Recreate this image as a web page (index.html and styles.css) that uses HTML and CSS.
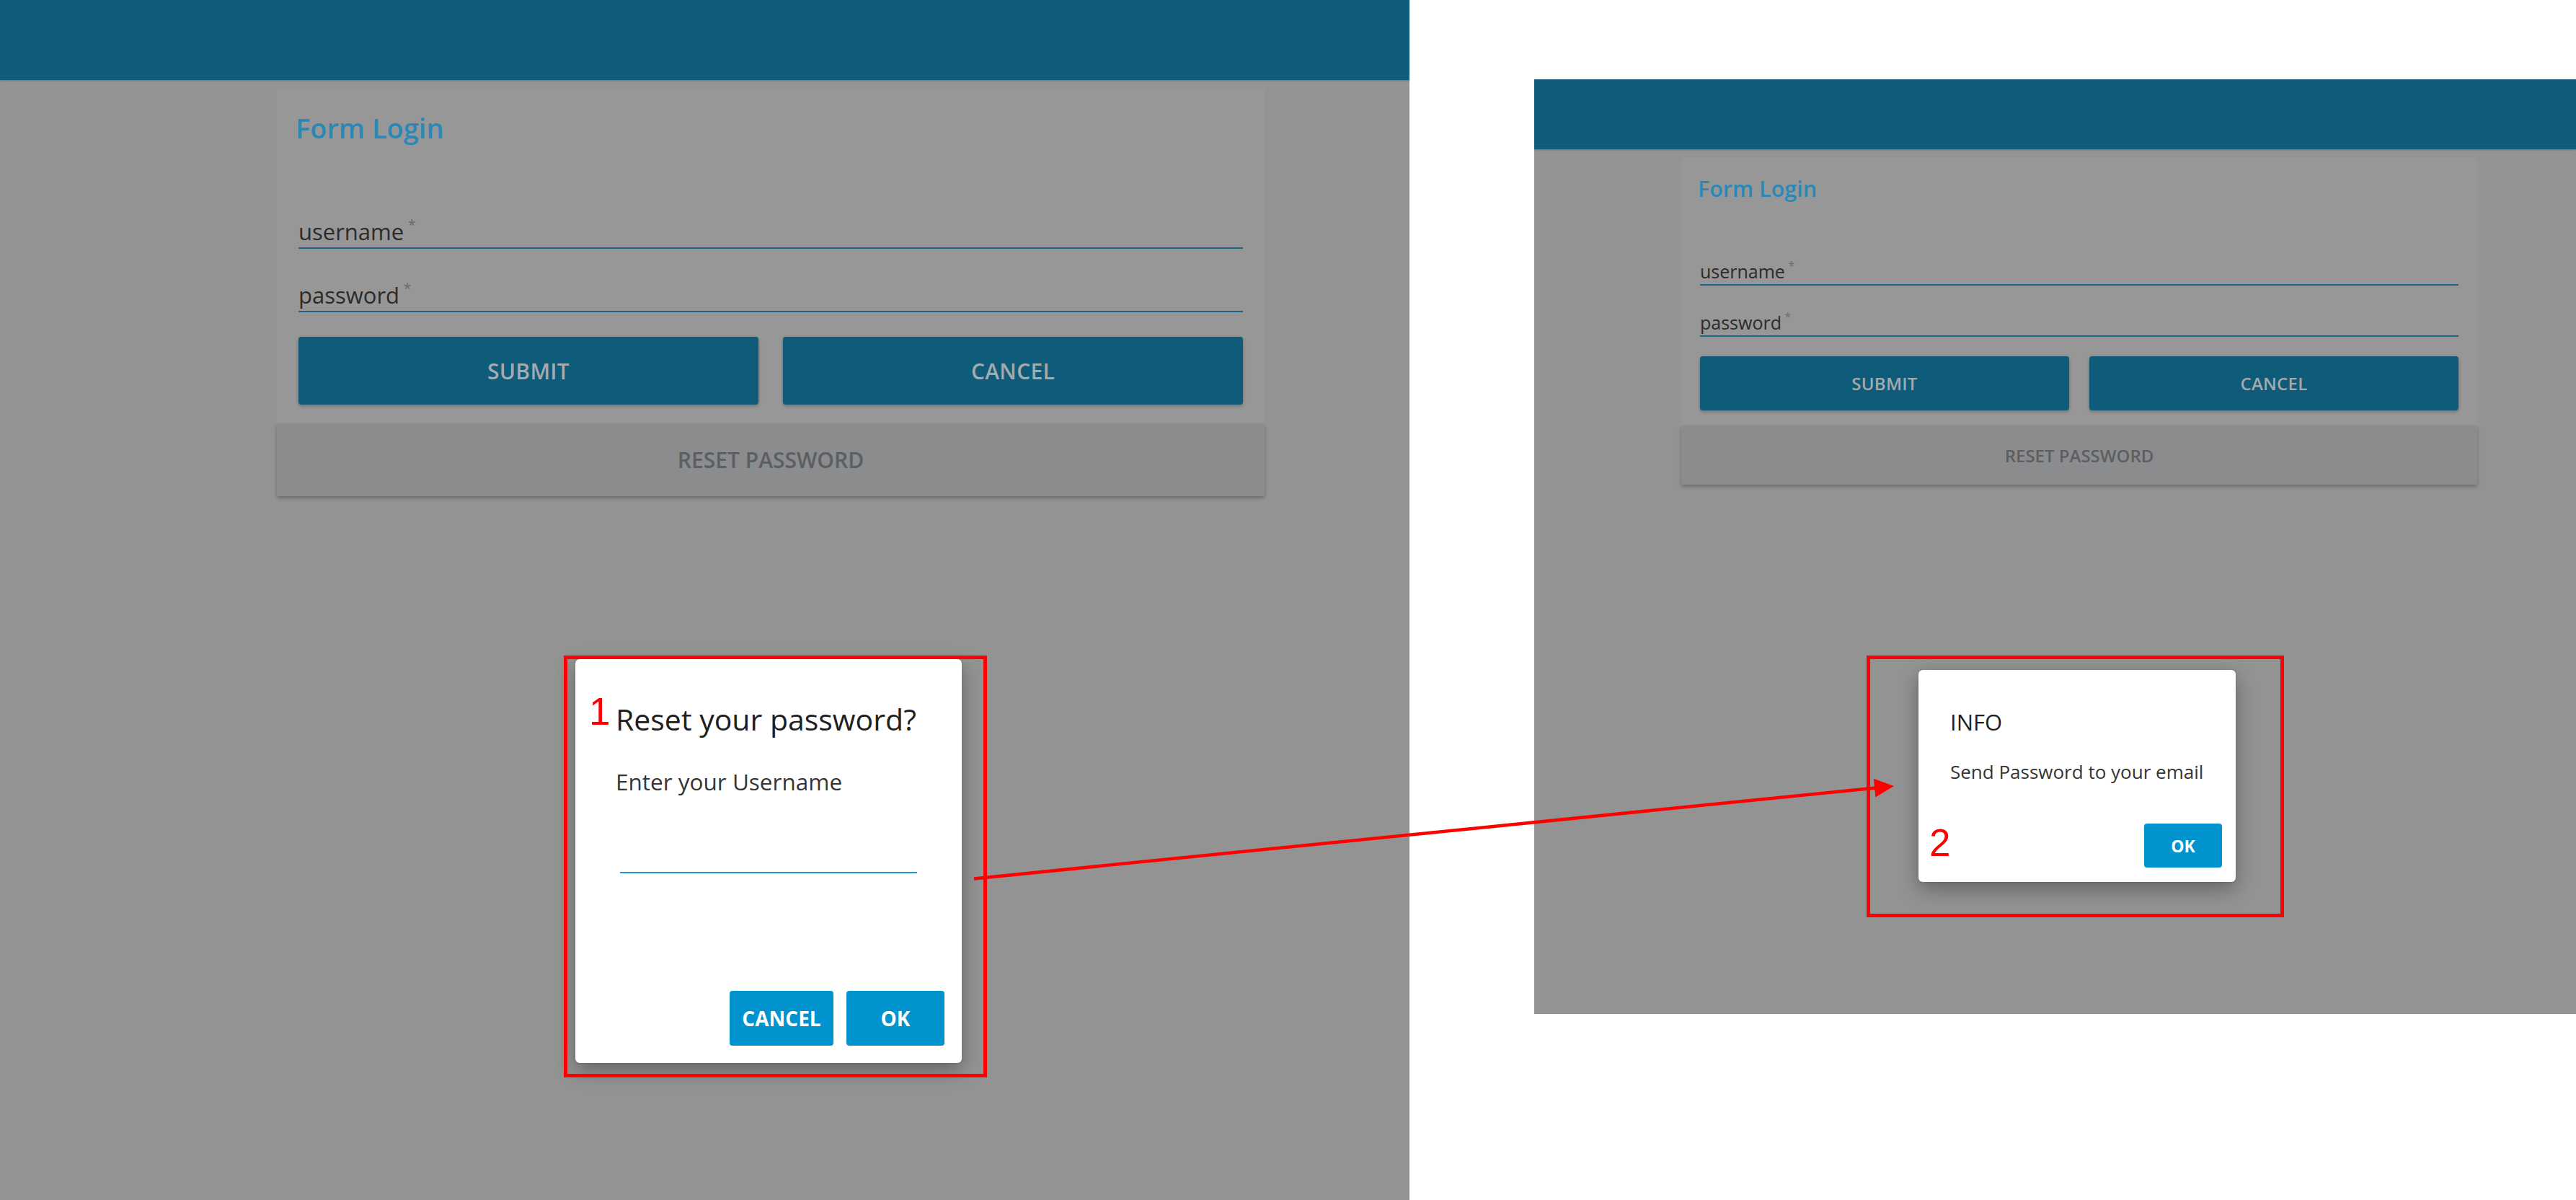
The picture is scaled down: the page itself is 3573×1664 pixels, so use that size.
FILE: index.html
```html
<!DOCTYPE html>
<html lang="en">
<head>
<meta charset="utf-8">
<title>Reset password flow</title>
<link rel="stylesheet" href="styles.css">
</head>
<body>
<div class="canvas">

  <section class="shot shot-1">
    <header class="appbar"></header>
    <div class="login">
      <div class="card">
        <h1 class="card-title">Form Login</h1>
        <div class="field"><span class="label">username<span class="req">*</span></span></div>
        <div class="field"><span class="label">password<span class="req">*</span></span></div>
        <div class="actions">
          <button class="btn">SUBMIT</button>
          <button class="btn">CANCEL</button>
        </div>
      </div>
      <button class="reset">RESET PASSWORD</button>
    </div>

    <div class="dialog dialog-reset">
      <h2 class="dialog-title">Reset your password?</h2>
      <p class="dialog-text">Enter your Username</p>
      <div class="dialog-input"></div>
      <div class="dialog-actions">
        <button class="dbtn dbtn-cancel">CANCEL</button>
        <button class="dbtn dbtn-ok">OK</button>
      </div>
    </div>
  </section>

  <section class="shot shot-2">
    <header class="appbar"></header>
    <div class="login">
      <div class="card">
        <h1 class="card-title">Form Login</h1>
        <div class="field"><span class="label">username<span class="req">*</span></span></div>
        <div class="field"><span class="label">password<span class="req">*</span></span></div>
        <div class="actions">
          <button class="btn">SUBMIT</button>
          <button class="btn">CANCEL</button>
        </div>
      </div>
      <button class="reset">RESET PASSWORD</button>
    </div>

    <div class="dialog dialog-info">
      <h2 class="dialog-title">INFO</h2>
      <p class="dialog-text">Send Password to your email</p>
      <div class="dialog-actions">
        <button class="dbtn dbtn-ok">OK</button>
      </div>
    </div>
  </section>

  <div class="callout callout-1"></div>
  <div class="callout callout-2"></div>
  <span class="step step-1">1</span>
  <span class="step step-2">2</span>

  <svg class="arrow" width="3573" height="1664" viewBox="0 0 3573 1664">
    <line x1="1351" y1="1218.5" x2="2602" y2="1092.5" stroke="#ff0000" stroke-width="4.5"/>
    <polygon points="2627,1090 2598.8,1079.8 2601.4,1105.6" fill="#ff0000"/>
  </svg>
</div>
</body>
</html>
```

FILE: styles.css
```css
* { box-sizing: border-box; }

html, body {
  margin: 0;
  padding: 0;
}

body {
  width: 3573px;
  height: 1664px;
  background: #ffffff;
  font-family: "Open Sans", "Noto Sans", sans-serif;
  overflow: hidden;
}

.canvas {
  position: relative;
  width: 3573px;
  height: 1664px;
}

/* ---------- screenshot panels ---------- */
.shot {
  position: absolute;
  background: #939393;
  overflow: hidden;
  display: flex;
  flex-direction: column;
}

.shot-1 { left: 0; top: 0; width: 1955px; height: 1664px; }
.shot-2 { left: 2128px; top: 110px; width: 1445px; height: 1296px; }

.appbar {
  flex: none;
  background: #115c7a;
  box-shadow: 0 1px 2px rgba(0, 0, 0, 0.25);
}
.shot-1 .appbar { height: 111px; }
.shot-2 .appbar { height: 97px; }

.login {
  display: flex;
  flex-direction: column;
}
.shot-1 .login { width: 1370px; margin: 12px 0 0 384px; }
.shot-2 .login { width: 1104px; margin: 11px 0 0 204px; }

.card {
  display: flex;
  flex-direction: column;
  background: #979797;
}
.shot-1 .card { padding: 28px 30px 26px; }
.shot-2 .card { padding: 22px 26px 21px; }

.card-title {
  margin: 0;
  font-weight: 600;
  color: #2a88b7;
}
.shot-1 .card-title { font-size: 38px; line-height: 52px; margin: 0 0 98px -4px; }
.shot-2 .card-title { font-size: 30.5px; line-height: 42px; margin: 0 0 78px -3px; }

.field {
  display: flex;
  align-items: flex-end;
  padding-bottom: 2px;
  border-bottom: 2px solid #1b6788;
  color: #2b2b2b;
}
.shot-1 .field { height: 44px; font-size: 31px; line-height: 40px; }
.shot-1 .field + .field { margin-top: 44px; }
.shot-2 .field { height: 36px; font-size: 25px; line-height: 32px; }
.shot-2 .field + .field { margin-top: 35px; }

.req {
  display: inline-block;
  margin-left: 0.3em;
  font-size: 0.62em;
  line-height: 1;
  vertical-align: 0.75em;
  color: #6b6b6b;
}

.actions {
  display: grid;
  grid-template-columns: 1fr 1fr;
}
.shot-1 .actions { gap: 34px; margin-top: 34px; }
.shot-2 .actions { gap: 28px; margin-top: 27px; }

.btn {
  border: none;
  border-radius: 4px;
  background: #0f5b7a;
  color: #a4aaae;
  font-family: inherit;
  font-weight: 600;
  letter-spacing: 0.01em;
  box-shadow: 0 2px 4px rgba(0, 0, 0, 0.28);
  padding: 0;
}
.shot-1 .btn { height: 94px; font-size: 30px; }
.shot-2 .btn { height: 75px; font-size: 24px; }

.reset {
  border: none;
  border-radius: 3px;
  background: #8b8c8e;
  color: #5c5e61;
  font-family: inherit;
  font-weight: 600;
  box-shadow: 0 3px 5px rgba(0, 0, 0, 0.25);
  padding: 0;
}
.shot-1 .reset { height: 101px; font-size: 30px; }
.shot-2 .reset { height: 82px; font-size: 24px; }

/* ---------- dialogs ---------- */
.dialog {
  position: absolute;
  display: flex;
  flex-direction: column;
  background: #ffffff;
  border-radius: 6px;
  box-shadow: 0 10px 28px rgba(0, 0, 0, 0.32), 0 0 3px rgba(0, 0, 0, 0.15);
}

.dialog-title {
  margin: 0;
  font-weight: 400;
  color: #202020;
}

.dialog-text {
  margin: 0;
  color: #353535;
}

.dialog-actions {
  margin-top: auto;
  display: flex;
  justify-content: flex-end;
}

.dbtn {
  border: none;
  border-radius: 4px;
  background: #0093cd;
  color: #ffffff;
  font-family: inherit;
  font-weight: 700;
  padding: 0;
}

.dialog-reset {
  left: 798px;
  top: 914px;
  width: 536px;
  height: 560px;
  padding: 56px 24px 24px 56px;
}
.dialog-reset .dialog-title { font-size: 41px; line-height: 54px; }
.dialog-reset .dialog-text { margin-top: 39px; font-size: 31.5px; line-height: 42px; }
.dialog-input {
  width: 412px;
  height: 40px;
  margin: 66px 0 0 6px;
  border-bottom: 2px solid #1e98d6;
}
.dialog-reset .dialog-actions { gap: 18px; }
.dialog-reset .dbtn { height: 76px; font-size: 28px; }
.dialog-reset .dbtn-cancel { width: 144px; }
.dialog-reset .dbtn-ok { width: 136px; }

.dialog-info {
  left: 533px;
  top: 819px;
  width: 440px;
  height: 294px;
  padding: 51px 19px 20px 44px;
}
.dialog-info .dialog-title { font-size: 31px; line-height: 42px; }
.dialog-info .dialog-text { margin-top: 30px; font-size: 26px; line-height: 36px; }
.dialog-info .dbtn-ok { width: 108px; height: 61px; font-size: 23px; }

/* ---------- annotations ---------- */
.callout {
  position: absolute;
  border: 5px solid #ff0000;
}
.callout-1 { left: 782px; top: 909px; width: 587px; height: 585px; }
.callout-2 { left: 2589px; top: 909px; width: 579px; height: 363px; }

.step {
  position: absolute;
  font-family: "Liberation Sans", Arial, sans-serif;
  font-size: 53px;
  line-height: 53px;
  color: #ff0000;
}
.step-1 { left: 817px; top: 960px; }
.step-2 { left: 2676px; top: 1142px; }

.arrow {
  position: absolute;
  left: 0;
  top: 0;
  pointer-events: none;
}
```
